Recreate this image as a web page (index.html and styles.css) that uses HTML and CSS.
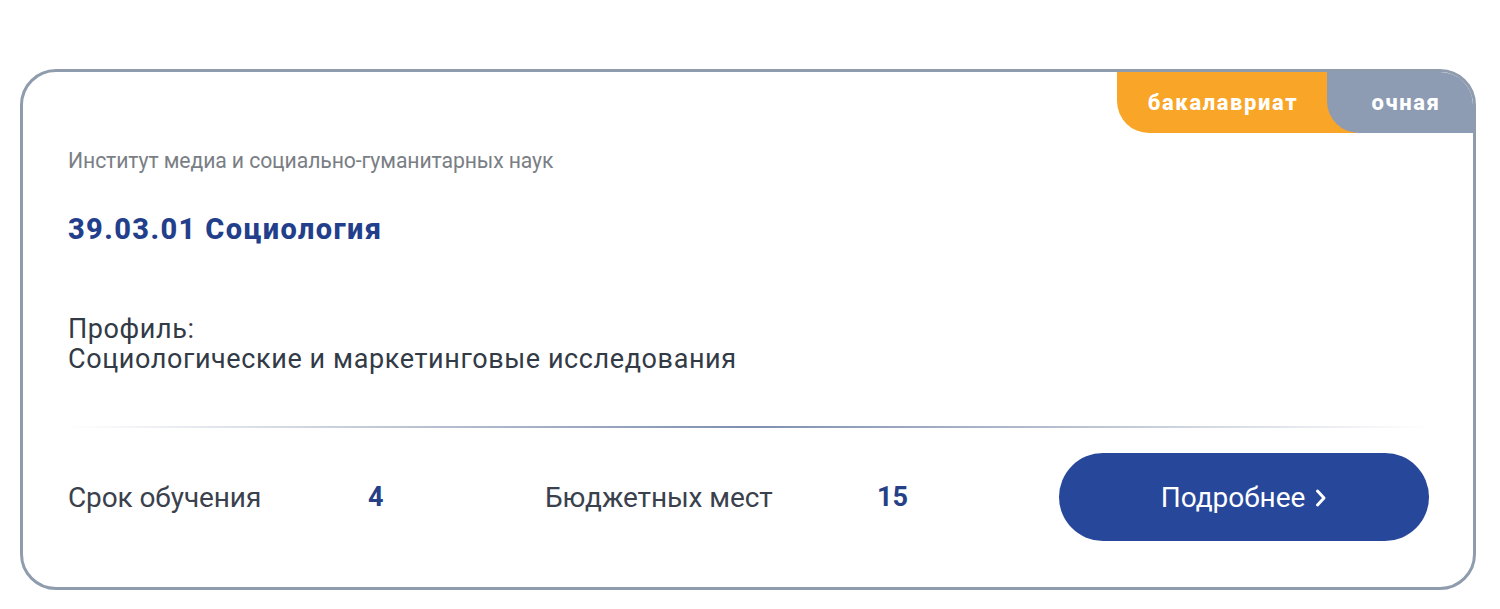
FILE: index.html
```html
<!DOCTYPE html>
<html lang="ru">
<head>
<meta charset="utf-8">
<link rel="stylesheet" href="styles.css">
</head>
<body>
<div class="card">
  <div class="badges">
    <span class="badge badge-level">бакалавриат</span>
    <span class="badge badge-form">очная</span>
  </div>
  <div class="institute">Институт медиа и социально-гуманитарных наук</div>
  <div class="title">39.03.01 Социология</div>
  <div class="profile">
    <div class="profile-line">Профиль:</div>
    <div class="profile-line">Социологические и маркетинговые исследования</div>
  </div>
  <div class="divider"></div>
  <div class="footer">
    <div class="stat stat-term">
      <span class="stat-label">Срок обучения</span>
      <span class="stat-value">4</span>
    </div>
    <div class="stat stat-budget">
      <span class="stat-label">Бюджетных мест</span>
      <span class="stat-value">15</span>
    </div>
    <a class="more" href="#">Подробнее
      <svg class="chev" width="12" height="20" viewBox="0 0 12 20"><path d="M2.5 3 L9 10 L2.5 17" fill="none" stroke="#fff" stroke-width="3" stroke-linecap="round" stroke-linejoin="round"/></svg>
    </a>
  </div>
</div>
</body>
</html>
```
FILE: styles.css
```css
html, body {
  margin: 0;
  padding: 0;
  background: #fff;
}
body {
  padding: 69px 24px 0 20px;
  font-family: Roboto, "Liberation Sans", sans-serif;
}
.card {
  position: relative;
  border: 3px solid #8f9cad;
  border-radius: 36px;
  padding: 76px 44px 43px 45px;
  height: 521px;
  box-sizing: border-box;
  overflow: hidden;
}
.badges {
  position: absolute;
  top: 0;
  right: 0;
  display: flex;
  height: 61px;
}
.badge {
  display: flex;
  align-items: center;
  justify-content: center;
  color: #fff;
  font-weight: 800;
  font-size: 22px;
  letter-spacing: 1.6px;
}
.badge-level {
  background: #f9a527;
  width: 240px;
  border-bottom-left-radius: 32px;
  padding-right: 28px;
  box-sizing: border-box;
}
.badge-form {
  background: #8d9bb3;
  width: 146px;
  margin-left: -30px;
  border-bottom-left-radius: 32px;
  padding-left: 12px;
  box-sizing: border-box;
}
.institute {
  font-size: 21.2px;
  line-height: 26px;
  color: #7a7e85;
  letter-spacing: -0.1px;
}
.title {
  margin-top: 38px;
  font-size: 29px;
  line-height: 34px;
  font-weight: 800;
  color: #233f8b;
  letter-spacing: 1.4px;
}
.profile {
  margin-top: 68px;
  color: #323a46;
}
.profile-line {
  font-size: 27px;
  line-height: 30px;
  letter-spacing: 0.6px;
}
.divider {
  margin-top: 52px;
  height: 2px;
  background: linear-gradient(90deg, rgba(143,156,180,0) 0%, rgba(143,156,180,0.6) 25%, #7f8fb0 50%, rgba(143,156,180,0.6) 75%, rgba(143,156,180,0) 100%);
}
.footer {
  margin-top: 25px;
  display: flex;
  align-items: center;
}
.stat {
  display: flex;
  align-items: center;
  font-size: 28px;
}
.stat-term {
  width: 477px;
}
.stat-label {
  color: #3a414c;
  width: 300px;
  letter-spacing: -0.1px;
}
.stat-budget .stat-label {
  width: 332px;
}
.stat-value {
  font-weight: 700;
  font-size: 27px;
  color: #263f86;
}
.more {
  margin-left: auto;
  width: 370px;
  height: 88px;
  border-radius: 44px;
  background: #27479a;
  color: #fff;
  text-decoration: none;
  font-size: 28px;
  display: flex;
  align-items: center;
  justify-content: center;
  gap: 10px;
}
.chev {
  margin-top: 2px;
}
```
